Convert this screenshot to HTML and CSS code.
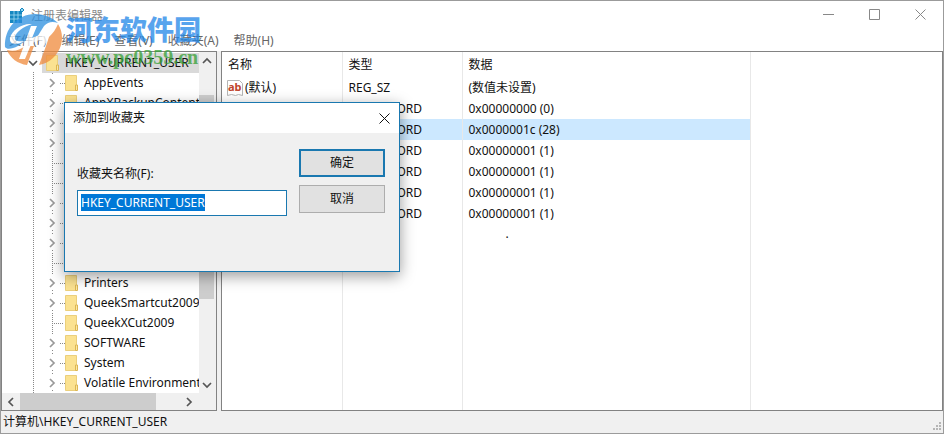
FILE: index.html
```html
<!DOCTYPE html>
<html lang="zh-CN">
<head>
	<meta charset="utf-8">
	<title>注册表编辑器</title>
	<link rel="stylesheet" href="styles.css">
</head>
<body>
	<!-- shared icons -->
	<svg class="defs" aria-hidden="true">
		<symbol id="folder" viewBox="0 0 14 16">
			<path d="M.5.5h11v15H.5z" fill="#fbe291" stroke="#ebcf7c"/>
			<path d="M10.500 10h2v5.500h-2z" fill="#fbe7a3" stroke="#dcb653"/>
		</symbol>
		<symbol id="right" viewBox="0 0 8 10"><path d="M2 1l4 4-4 4" fill="none" stroke="currentColor" stroke-width="1.700"/></symbol>
		<symbol id="left" viewBox="0 0 8 10"><path d="M6 1L2 5l4 4" fill="none" stroke="currentColor" stroke-width="1.700"/></symbol>
		<symbol id="down" viewBox="0 0 10 8"><path d="M1 2l4 4 4-4" fill="none" stroke="currentColor" stroke-width="1.700"/></symbol>
		<symbol id="up" viewBox="0 0 10 8"><path d="M1 6l4-4 4 4" fill="none" stroke="currentColor" stroke-width="1.700"/></symbol>
	</svg>

	<header class="titlebar">
		<svg class="app-icon" viewBox="0 0 16 16">
			<path d="M1 3h12v12H1z" fill="#1587c0"/>
			<path d="M1 7h12M1 11h12M5 3v12M9 3v12" stroke="#a5dcf2" stroke-width=".8"/>
			<path d="M13 0l2 2-2 2-2-2z" fill="#8fd3ee" stroke="#1587c0"/>
		</svg>
		<h1>注册表编辑器</h1>
		<div class="window-buttons">
			<button type="button" aria-label="最小化"><svg viewBox="0 0 11 11"><path d="M0 5.500h11"/></svg></button>
			<button type="button" aria-label="最大化"><svg viewBox="0 0 11 11"><path d="M.5.5h10v10H.5z"/></svg></button>
			<button type="button" aria-label="关闭"><svg viewBox="0 0 11 11"><path d="M.5.5l10 10M10.500.5l-10 10"/></svg></button>
		</div>
	</header>

	<nav class="menu">
		<button type="button">文件(F)</button>
		<button type="button">编辑(E)</button>
		<button type="button">查看(V)</button>
		<button type="button">收藏夹(A)</button>
		<button type="button">帮助(H)</button>
	</nav>

	<main class="panes">
		<section class="tree-pane">
			<ul class="tree">
				<li class="root"><svg class="chevron"><use href="#down"/></svg><svg class="folder"><use href="#folder"/></svg><span>HKEY_CURRENT_USER</span></li>
				<li><svg class="chevron"><use href="#right"/></svg><svg class="folder"><use href="#folder"/></svg><span>AppEvents</span></li>
				<li><svg class="chevron"><use href="#right"/></svg><svg class="folder"><use href="#folder"/></svg><span>AppXBackupContentType</span></li>
				<li><svg class="chevron"><use href="#right"/></svg></li>
				<li><svg class="chevron"><use href="#right"/></svg></li>
				<li class="leaf"></li>
				<li class="leaf"></li>
				<li><svg class="chevron"><use href="#right"/></svg></li>
				<li><svg class="chevron"><use href="#right"/></svg></li>
				<li><svg class="chevron"><use href="#right"/></svg></li>
				<li class="leaf"></li>
				<li><svg class="chevron"><use href="#right"/></svg><svg class="folder"><use href="#folder"/></svg><span>Printers</span></li>
				<li><svg class="chevron"><use href="#right"/></svg><svg class="folder"><use href="#folder"/></svg><span>QueekSmartcut2009</span></li>
				<li class="leaf"><svg class="folder"><use href="#folder"/></svg><span>QueekXCut2009</span></li>
				<li><svg class="chevron"><use href="#right"/></svg><svg class="folder"><use href="#folder"/></svg><span>SOFTWARE</span></li>
				<li><svg class="chevron"><use href="#right"/></svg><svg class="folder"><use href="#folder"/></svg><span>System</span></li>
				<li><svg class="chevron"><use href="#right"/></svg><svg class="folder"><use href="#folder"/></svg><span>Volatile Environment</span></li>
			</ul>
			<div class="vscroll">
				<button type="button" aria-label="向上"><svg><use href="#up"/></svg></button>
				<div class="track"><div class="thumb"></div></div>
				<button type="button" aria-label="向下"><svg><use href="#down"/></svg></button>
			</div>
			<div class="hscroll">
				<button type="button" aria-label="向左"><svg><use href="#left"/></svg></button>
				<div class="track"><div class="thumb"></div></div>
				<button type="button" aria-label="向右"><svg><use href="#right"/></svg></button>
			</div>
		</section>

		<section class="list-pane">
			<table>
				<colgroup><col class="c-name"><col class="c-type"><col class="c-data"></colgroup>
				<thead>
					<tr><th>名称</th><th>类型</th><th>数据</th></tr>
				</thead>
				<tbody>
					<tr>
						<td class="value-name"><svg class="value-icon" viewBox="0 0 16 16"><path d="M.5.5h12l3 3v12l-4-1-3 1-4-1-4 1z" fill="#fff" stroke="#b5b5b5"/><text x="1" y="11">ab</text></svg>(默认)</td>
						<td>REG_SZ</td><td>(数值未设置)</td>
					</tr>
					<tr><td></td><td>REG_DWORD</td><td>0x00000000 (0)</td></tr>
					<tr class="selected"><td></td><td>REG_DWORD</td><td>0x0000001c (28)</td></tr>
					<tr><td></td><td>REG_DWORD</td><td>0x00000001 (1)</td></tr>
					<tr><td></td><td>REG_DWORD</td><td>0x00000001 (1)</td></tr>
					<tr><td></td><td>REG_DWORD</td><td>0x00000001 (1)</td></tr>
					<tr><td></td><td>REG_DWORD</td><td>0x00000001 (1)</td></tr>
					<tr class="rest"><td></td><td></td><td class="dot">.</td></tr>
				</tbody>
			</table>
		</section>
	</main>

	<footer class="status">
		<span>计算机\HKEY_CURRENT_USER</span>
		<svg class="grip" viewBox="0 0 8 8"><path d="M6 0h2v2H6zM3 3h2v2H3zM6 3h2v2H6zM0 6h2v2H0zM3 6h2v2H3zM6 6h2v2H6z"/></svg>
	</footer>

	<div class="dialog" role="dialog" aria-labelledby="dialog-title">
		<div class="dialog-title">
			<h2 id="dialog-title">添加到收藏夹</h2>
			<button type="button" aria-label="关闭"><svg viewBox="0 0 11 11"><path d="M.5.5l10 10M10.500.5l-10 10"/></svg></button>
		</div>
		<form class="dialog-body">
			<div class="field">
				<label for="fav-name">收藏夹名称(F):</label>
				<input id="fav-name" type="text" value="HKEY_CURRENT_USER" autofocus>
			</div>
			<div class="actions">
				<button type="button" class="primary">确定</button>
				<button type="button">取消</button>
			</div>
		</form>
	</div>

	<div class="watermark">
		<svg viewBox="0 0 58 54">
			<path d="M1 34C0 16 13 1 31 1c10 0 18 4 23 9-6-2-10-1-14 3l-5 8-4 7H21l-7 5C8 36 3 37 1 34z" fill="#2b8fe0"/>
			<path d="M54 11c4 6 5 14 3 21-3 10-11 18-22 20l7-19 3-9c4-4 7-8 9-13zM3 37c7 2 13 0 18-4h9l-7 19C14 51 6 45 3 37z" fill="#ef8a3c"/>
			<path d="M28 11c-10-1-20 6-22 14-1 6 5 8 15 3-7 1-11 0-10-4 1-5 8-10 17-13z" fill="#fff"/>
			<path d="M27 13h6l-5 12c8-4 15-4 15 1 0 3-6 13-8 20h-6c2-7 6-14 7-18-3-2-8 2-10 6l-5 12h-6z" fill="#fff"/>
		</svg>
		<div>
			<p class="mark-name">河东软件园</p>
			<p class="mark-url">www.pc0359.cn</p>
		</div>
	</div>

	<script>
		document.getElementById('fav-name').select();
	</script>
</body>
</html>
```
FILE: styles.css
```css
* {
	box-sizing: border-box;
}
body {
	margin: 0;
	height: 100vh;
	display: flex;
	flex-direction: column;
	overflow: hidden;
	border: 1px solid #9b9b9b;
	background: #fff;
	color: #111;
	font: 12px/20px "Noto Sans", "Noto Sans CJK SC", sans-serif;
}
h1, h2, p, ul {
	margin: 0;
	padding: 0;
	font-size: 12px;
	font-weight: normal;
}
button, input {
	font: inherit;
	color: inherit;
}
button {
	border: 0;
	padding: 0;
	background: none;
}
.defs {
	position: absolute;
	width: 0;
	height: 0;
}

/* title bar and menu */
.titlebar {
	display: flex;
	align-items: center;
	height: 30px;
	padding-left: 8px;
	color: #8a8a8a;
}
.app-icon {
	width: 16px;
	height: 16px;
	margin-right: 6px;
}
.window-buttons {
	display: flex;
	margin-left: auto;
}
.window-buttons button {
	width: 46px;
	height: 28px;
}
.window-buttons svg, .dialog-title svg {
	width: 11px;
	height: 11px;
	fill: none;
	stroke: #888;
}
.menu {
	display: flex;
	gap: 15px;
	height: 20px;
	padding-left: 8px;
	color: #666;
}

/* panes */
.panes {
	flex: 1;
	display: flex;
	gap: 4px;
	min-height: 0;
	background: #f0f0f0;
}
.tree-pane, .list-pane {
	border: 1px solid #828282;
	background: #fff;
}
.tree-pane {
	width: 216px;
	display: grid;
	grid-template-columns: 1fr 17px;
	grid-template-rows: 1fr 17px;
}
.tree {
	list-style: none;
	overflow: hidden;
	min-height: 0;
	min-width: 0;
	padding-top: 1px;
	background: repeating-linear-gradient(#888 0 1px, #fff 1px 2px) 31px 20px / 1px 100% no-repeat;
}
.tree li {
	display: flex;
	align-items: center;
	height: 20px;
	margin-left: 50px;
	white-space: nowrap;
	background:
		repeating-linear-gradient(90deg, #888 0 1px, #fff 1px 2px) 8px 10px / 6px 1px no-repeat,
		repeating-linear-gradient(#888 0 1px, #fff 1px 3px) 0 0 / 1px 3px no-repeat,
		repeating-linear-gradient(#888 0 1px, #fff 1px 3px) 0 17px / 1px 3px no-repeat;
}
.tree li.leaf {
	padding-left: 7px;
	background:
		repeating-linear-gradient(90deg, #888 0 1px, #fff 1px 2px) 0 10px / 12px 1px no-repeat,
		repeating-linear-gradient(#888 0 1px, #fff 1px 2px) 0 0 / 1px 100% no-repeat;
}
.tree li.root {
	margin-left: 26px;
	background: linear-gradient(#d9d9d9, #d9d9d9) 14px 0 no-repeat;
}
.chevron {
	flex: none;
	width: 10px;
	height: 10px;
	margin: 0 2px 0 -5px;
	color: #999;
}
.root .chevron {
	margin: 0;
	color: #555;
}
.folder {
	flex: none;
	width: 14px;
	height: 16px;
	margin: 0 5px 0 6px;
}
.root .folder {
	margin-left: 8px;
}
.vscroll, .hscroll {
	display: flex;
	background: #f0f0f0;
	color: #555;
}
.vscroll {
	flex-direction: column;
	padding-right: 2px;
}
.hscroll {
	padding-right: 18px;
	grid-column: 1 / 3;
}
.vscroll button, .hscroll button {
	display: flex;
	align-items: center;
	justify-content: center;
	width: 100%;
	height: 17px;
}
.hscroll button {
	width: 18px;
}
.vscroll svg {
	width: 10px;
	height: 8px;
}
.hscroll svg {
	width: 8px;
	height: 10px;
}
.track {
	flex: 1;
	display: flex;
}
.thumb {
	background: #cdcdcd;
}
.vscroll .track {
	padding-top: 26px;
}
.vscroll .thumb {
	width: 100%;
	height: 204px;
}
.hscroll .thumb {
	width: 85%;
}

/* value list */
.list-pane {
	flex: 1;
}
table {
	height: 100%;
	table-layout: fixed;
	width: 529px;
	border-collapse: collapse;
}
.c-name {
	width: 120px;
}
.c-type {
	width: 120px;
}
th, td {
	height: 21px;
	padding: 0 0 0 6px;
	border-right: 1px solid #e8e8e8;
	line-height: 20px;
	text-align: left;
	font-weight: normal;
	white-space: nowrap;
}
th {
	height: 25px;
}
.value-name {
	padding-left: 5px;
}
.value-icon {
	width: 16px;
	height: 16px;
	margin-right: 2px;
	vertical-align: middle;
}
.value-icon text {
	font: bold 11px "Noto Sans", sans-serif;
	fill: #c0452c;
}
.selected {
	background: #cce8ff;
}
.rest td {
	height: auto;
	vertical-align: top;
}
.rest .dot {
	padding-left: 43px;
}

/* status bar */
.status {
	display: flex;
	align-items: center;
	justify-content: space-between;
	height: 22px;
	padding: 0 2px;
	background: #f0f0f0;
}
.grip {
	width: 8px;
	height: 8px;
	align-self: flex-end;
	margin-bottom: 3px;
	fill: #b5b5b5;
}

/* dialog over the window */
.dialog {
	position: absolute;
	left: 64px;
	top: 102px;
	width: 336px;
	border: 1px solid #1a78b0;
	background: #f0f0f0;
	box-shadow: 0 4px 14px rgba(0, 0, 0, .4);
}
.dialog-title {
	display: flex;
	align-items: center;
	justify-content: space-between;
	height: 30px;
	padding: 0 9px 0 8px;
	background: #fff;
}
.dialog-title svg {
	display: block;
	stroke: #111;
}
.dialog-body {
	display: flex;
	gap: 12px;
	height: 138px;
	padding: 16px 14px 0 12px;
}
.field {
	flex: 1;
	padding-top: 15px;
}
.field label {
	display: block;
}
.field input {
	width: 100%;
	height: 26px;
	margin-top: 6px;
	padding: 0 3px 2px;
	border: 1px solid #1a78b0;
	outline: 0;
	background: #fff;
}
.field input::selection {
	background: #0078d7;
	color: #fff;
}
.actions {
	display: flex;
	flex-direction: column;
	gap: 8px;
	width: 86px;
}
.actions button {
	height: 28px;
	border: 1px solid #adadad;
	background: #e1e1e1;
}
.actions .primary {
	border: 2px solid #1a78b0;
}

/* site mark */
.watermark {
	position: absolute;
	left: 4px;
	top: 13px;
	display: flex;
	gap: 4px;
	opacity: .75;
	pointer-events: none;
}
.watermark svg {
	width: 58px;
	height: 54px;
}
.mark-name {
	color: #1f86e8;
	font: 900 27px/32px "Noto Sans CJK SC", sans-serif;
}
.mark-url {
	color: #35a035;
	font: bold 20px/24px "Liberation Serif", serif;
}
```
